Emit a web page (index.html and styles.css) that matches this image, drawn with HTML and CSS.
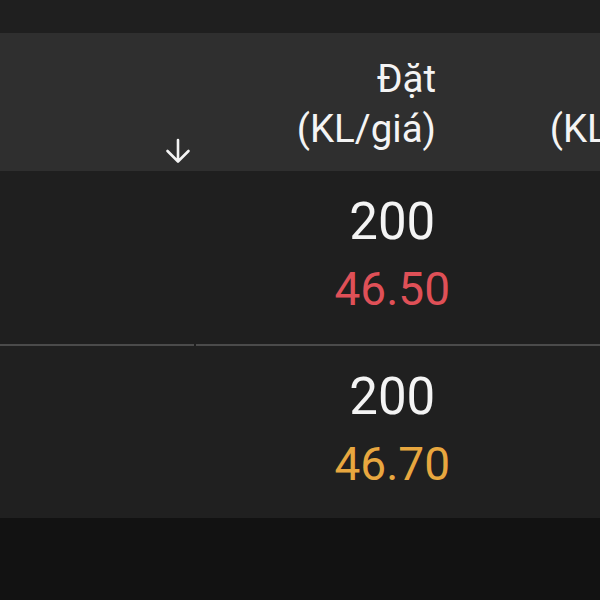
FILE: index.html
```html
<!DOCTYPE html>
<html lang="vi">
<head>
<meta charset="utf-8">
<link rel="stylesheet" href="styles.css">
</head>
<body>
<div class="screen">
  <div class="topbar"></div>
  <div class="table">
    <div class="row head">
      <div class="cell c1">
        <svg class="arrow" width="26" height="26" viewBox="0 0 26 26" aria-hidden="true">
          <path d="M13 2 V23 M2.5 13 L13 23.5 L23.5 13" fill="none" stroke="#f4f4f4" stroke-width="2.6" stroke-linecap="round" stroke-linejoin="round"/>
        </svg>
      </div>
      <div class="cell c2 htext">Đặt<br>(KL/giá)</div>
      <div class="cell c3 htext">Khớp<br>(KL/giá)</div>
    </div>
    <div class="row body first">
      <div class="cell c1"></div>
      <div class="cell c2 vals">
        <div class="pair">
          <span class="qty">200</span>
          <span class="price down">46.50</span>
        </div>
      </div>
      <div class="cell c3"></div>
    </div>
    <div class="sep"><span class="seg a"></span><span class="seg b"></span></div>
    <div class="row body second">
      <div class="cell c1"></div>
      <div class="cell c2 vals">
        <div class="pair">
          <span class="qty">200</span>
          <span class="price ref">46.70</span>
        </div>
      </div>
      <div class="cell c3"></div>
    </div>
  </div>
  <div class="bottom"></div>
</div>
</body>
</html>
```

FILE: styles.css
```css
html, body {
  margin: 0;
  padding: 0;
  background: #121212;
}
body {
  font-family: Roboto, "Noto Sans", sans-serif;
  color: #f4f4f4;
  width: 600px;
  height: 600px;
  overflow: hidden;
}
.screen {
  display: flex;
  flex-direction: column;
  width: 600px;
  height: 600px;
  overflow: hidden;
}
.topbar {
  height: 33px;
  background: #1f1f1f;
  flex: none;
}
.table {
  display: flex;
  flex-direction: column;
  flex: none;
}
.row {
  display: grid;
  grid-template-columns: 195px 255px 260px;
  width: 710px;
}
.head {
  height: 138px;
  background: #2f2f2f;
}
.body {
  background: #1f1f1f;
}
.first { height: 173px; }
.second { height: 172px; background: #202020; }
.cell {
  display: flex;
  min-width: 0;
}
.head .c1 {
  justify-content: flex-end;
  align-items: flex-end;
  padding: 0 4px 7px 0;
}
.htext {
  display: block;
  text-align: right;
  font-size: 38.5px;
  line-height: 50px;
  padding: 21px 14px 0 0;
  white-space: nowrap;
}
.head .c3 {
  padding-right: 21px;
}
.vals {
  justify-content: flex-end;
  padding-right: 0;
}
.pair {
  display: flex;
  flex-direction: column;
  align-items: center;
  padding-top: 21px;
}
.qty {
  font-size: 51px;
  line-height: 60px;
}
.price {
  font-size: 46px;
  line-height: 60px;
  margin-top: 7px;
}
.down { color: #df5057; }
.ref { color: #e8a73f; }
.sep {
  display: flex;
  gap: 2px;
  height: 2px;
  background: #1f1f1f;
}
.seg {
  display: block;
  height: 2px;
  background: #4b4b4b;
}
.seg.a { width: 194px; }
.seg.b { flex: 1; }
.bottom {
  flex: 1;
  background: #121212;
}
```
